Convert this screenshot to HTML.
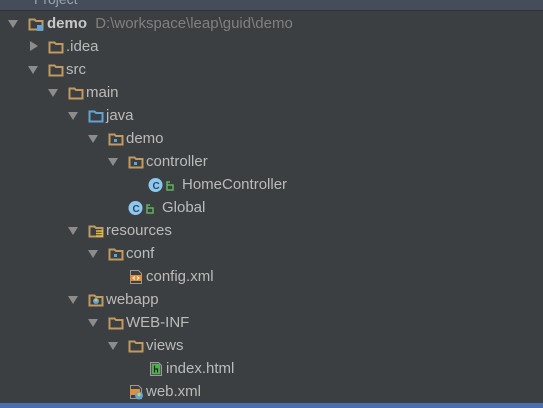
<!DOCTYPE html>
<html><head><style>
body{margin:0;width:543px;height:408px;background:#3c3f41;overflow:hidden;position:relative;font-family:"Liberation Sans","DejaVu Sans",sans-serif;font-size:15px;color:#bbbbbb}
.hdr{position:absolute;left:0;top:0;width:543px;height:10px;background:#454d5b;border-bottom:1px solid #2f3338;overflow:hidden}
.hdr span{position:absolute;left:34px;top:-9px;color:#9aa3b0;font-size:14px}
.row{position:absolute;height:23px;line-height:23px;white-space:nowrap}
.arr{position:absolute;top:8px;width:0;height:0}
.down{border-left:5px solid transparent;border-right:5px solid transparent;border-top:8px solid #8c8c8c}
.right{border-top:5px solid transparent;border-bottom:5px solid transparent;border-left:8px solid #8c8c8c;top:6px}
.ic{position:absolute;top:4px;width:16px;height:16px}
.t{position:absolute;top:0}
.sel{position:absolute;left:0;top:403px;width:543px;height:5px;background:#4b6eaf}
</style></head><body>
<div class="hdr"><span>Project</span></div>
<svg width="0" height="0" style="position:absolute">
<defs>
<g id="f"><path d="M1.5 3.5h5l1.5 1.5h6.5v8.5h-13z" fill="none" stroke="#c09a5e" stroke-width="2"/></g>
</defs></svg>

<div class="row" style="top:12px;left:0;width:543px">
 <div class="arr down" style="left:8px"></div>
 <svg class="ic" style="left:28px"><use href="#f"/><rect x="9" y="9" width="6" height="6" fill="#5fa3d8"/></svg>
 <span class="t" style="left:47px"><b style="color:#c8c8c8">demo</b> <span style="color:#808080;margin-left:4px">D:\workspace\leap\guid\demo</span></span>
</div>
<div class="row" style="top:35px;left:0"><div class="arr right" style="left:30px"></div><svg class="ic" style="left:48px"><use href="#f"/></svg><span class="t" style="left:66px">.idea</span></div>
<div class="row" style="top:58px;left:0"><div class="arr down" style="left:28px"></div><svg class="ic" style="left:48px"><use href="#f"/></svg><span class="t" style="left:66px">src</span></div>
<div class="row" style="top:81px;left:0"><div class="arr down" style="left:48px"></div><svg class="ic" style="left:68px"><use href="#f"/></svg><span class="t" style="left:86px">main</span></div>
<div class="row" style="top:104px;left:0"><div class="arr down" style="left:68px"></div><svg class="ic" style="left:88px"><path d="M1.5 3.5h5l1.5 1.5h6.5v8.5h-13z" fill="none" stroke="#5fa3d8" stroke-width="2"/></svg><span class="t" style="left:106px">java</span></div>
<div class="row" style="top:127px;left:0"><div class="arr down" style="left:88px"></div><svg class="ic" style="left:108px"><use href="#f"/><rect x="6" y="8" width="3" height="3" fill="#5fa3d8"/></svg><span class="t" style="left:126px">demo</span></div>
<div class="row" style="top:150px;left:0"><div class="arr down" style="left:108px"></div><svg class="ic" style="left:128px"><use href="#f"/><rect x="6" y="8" width="3" height="3" fill="#5fa3d8"/></svg><span class="t" style="left:146px">controller</span></div>
<div class="row" style="top:173px;left:0"><svg class="ic" style="left:148px;width:32px"><circle cx="7.5" cy="8" r="7" fill="#8ec8ee"/><text x="4.5" y="12" font-size="10" font-weight="bold" fill="#2b4a6a" font-family="Liberation Sans">C</text><rect x="19" y="8" width="6" height="5" fill="none" stroke="#5fb05f" stroke-width="1.5"/><path d="M19 8v-3h3" fill="none" stroke="#5fb05f" stroke-width="1.5"/></svg><span class="t" style="left:182px">HomeController</span></div>
<div class="row" style="top:196px;left:0"><svg class="ic" style="left:128px;width:32px"><circle cx="7.5" cy="8" r="7" fill="#8ec8ee"/><text x="4.5" y="12" font-size="10" font-weight="bold" fill="#2b4a6a" font-family="Liberation Sans">C</text><rect x="19" y="8" width="6" height="5" fill="none" stroke="#5fb05f" stroke-width="1.5"/><path d="M19 8v-3h3" fill="none" stroke="#5fb05f" stroke-width="1.5"/></svg><span class="t" style="left:162px">Global</span></div>
<div class="row" style="top:219px;left:0"><div class="arr down" style="left:68px"></div><svg class="ic" style="left:88px"><use href="#f"/><path d="M8 8h7M8 10.5h7M8 13h7" stroke="#e8c040" stroke-width="1.5"/></svg><span class="t" style="left:106px">resources</span></div>
<div class="row" style="top:242px;left:0"><div class="arr down" style="left:88px"></div><svg class="ic" style="left:108px"><use href="#f"/><rect x="6" y="8" width="3" height="3" fill="#5fa3d8"/></svg><span class="t" style="left:126px">conf</span></div>
<div class="row" style="top:265px;left:0"><svg class="ic" style="left:128px"><path d="M2.5 1.5h8l3 3v10h-11z" fill="none" stroke="#9a9a9a"/><rect x="2" y="6" width="12" height="6" fill="#e0903a"/><path d="M7 7.5l-2 1.5 2 1.5M9 7.5l2 1.5-2 1.5" stroke="#fff" fill="none"/></svg><span class="t" style="left:146px">config.xml</span></div>
<div class="row" style="top:288px;left:0"><div class="arr down" style="left:68px"></div><svg class="ic" style="left:88px"><use href="#f"/><circle cx="8" cy="9" r="3" fill="#5fa3d8"/><circle cx="8" cy="8" r="1.5" fill="#e8c040"/></svg><span class="t" style="left:106px">webapp</span></div>
<div class="row" style="top:311px;left:0"><div class="arr down" style="left:88px"></div><svg class="ic" style="left:108px"><use href="#f"/></svg><span class="t" style="left:126px">WEB-INF</span></div>
<div class="row" style="top:334px;left:0"><div class="arr down" style="left:108px"></div><svg class="ic" style="left:128px"><use href="#f"/></svg><span class="t" style="left:146px">views</span></div>
<div class="row" style="top:357px;left:0"><svg class="ic" style="left:148px"><path d="M2.5 1.5h8l3 3v10h-11z" fill="#555" stroke="#9a9a9a"/><rect x="4" y="3" width="8" height="10" fill="#4fb04f"/><path d="M6.5 4.5v7M6.5 8h3v3.5" stroke="#222" fill="none" stroke-width="1.2"/></svg><span class="t" style="left:166px">index.html</span></div>
<div class="row" style="top:380px;left:0"><svg class="ic" style="left:128px"><path d="M2.5 1.5h8l3 3v10h-11z" fill="none" stroke="#9a9a9a"/><rect x="2" y="5" width="10" height="6" fill="#e0903a"/><circle cx="11" cy="11.5" r="4" fill="#5fa3d8"/><circle cx="11" cy="10.5" r="1.8" fill="#e8c040"/></svg><span class="t" style="left:146px">web.xml</span></div>
<div class="sel"></div>
</body></html>
